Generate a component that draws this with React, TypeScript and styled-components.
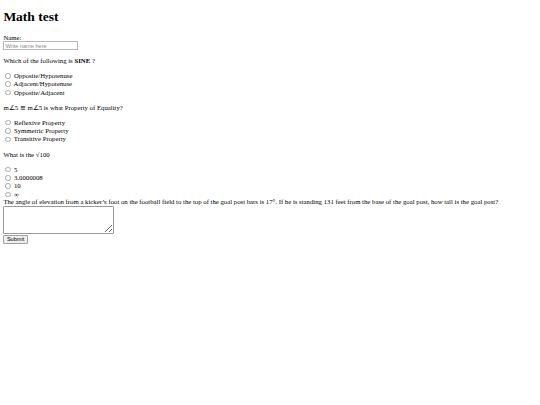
import styled, { createGlobalStyle } from 'styled-components'

// the reference is a 1280px-wide page photographed at 540px, so every
// browser default below is multiplied by 540 / 1280
const GlobalStyle = createGlobalStyle`
  body {
    margin: 0 3.375px 3.375px;
    font-family: "Liberation Serif", "Times New Roman", serif;
    font-size: 6.75px;
    color: #000;
    background: #fff;
  }
`

const Title = styled.h1`
  font-size: 13.5px;
  margin: 9px 0;
  font-weight: bold;
`

const Label = styled.label`
  display: block;
`

const NameInput = styled.input`
  box-sizing: border-box;
  width: 75px;
  height: 9px;
  padding: 0 1px;
  border: 1px solid #b8b8b8;
  border-radius: 0.5px;
  font-family: "Liberation Sans", Arial, sans-serif;
  font-size: 5.6px;

  &::placeholder {
    color: #8a8a8a;
  }
`

const Question = styled.p`
  margin: 7.2px 0;
  height: 7.6px;
  line-height: 7.6px;
`

const OptionList = styled.div``

const Option = styled.label`
  display: block;
  height: 8.3px;
  line-height: 8.3px;
`

const Radio = styled.input`
  appearance: none;
  box-sizing: border-box;
  width: 5.5px;
  height: 5.5px;
  margin: 0 1.3px 0 2.1px;
  border: 0.7px solid #a6a6a6;
  border-radius: 50%;
  background: #fff;
  vertical-align: -0.6px;

  &:checked {
    background: radial-gradient(circle, #1a73e8 45%, #fff 50%);
    border-color: #1a73e8;
  }
`

const Prompt = styled.div`
  line-height: 6.8px;
`

const AnswerBox = styled.textarea`
  display: block;
  box-sizing: border-box;
  width: 111px;
  height: 28px;
  margin: 0;
  padding: 1px;
  border: 1px solid #9a9a9a;
  border-radius: 1px;
  font-family: "Liberation Mono", monospace;
  font-size: 5.6px;
  resize: both;
`

const SubmitButton = styled.button`
  box-sizing: border-box;
  height: 9px;
  margin-top: 1.5px;
  padding: 0 2.5px;
  border: 1px solid #a0a0a0;
  border-radius: 1px;
  background: #efefef;
  font-family: "Liberation Sans", Arial, sans-serif;
  font-size: 5.6px;
  line-height: 1;
`

interface QuestionData {
  name: string
  prompt: React.ReactNode
  options: string[]
}

const questions: QuestionData[] = [
  {
    name: 'q1',
    prompt: (
      <>
        Which of the following is <b>SINE</b> ?
      </>
    ),
    options: ['Opposite/Hypotenuse', 'Adjacent/Hypotenuse', 'Opposite/Adjacent'],
  },
  {
    name: 'q2',
    prompt: 'm∠5 ≅ m∠5 is what Property of Equality?',
    options: ['Reflexive Property', 'Symmetric Property', 'Transitive Property'],
  },
  {
    name: 'q3',
    prompt: 'What is the √100',
    options: ['5', '3.0000008', '10', '∞'],
  },
]

const App: React.FC = () => {
  return (
    <>
      <GlobalStyle />
      <Title>Math test</Title>
      <form onSubmit={(e) => e.preventDefault()}>
        <Label htmlFor="name">Name:</Label>
        <NameInput id="name" type="text" placeholder="Write name here" />
        {questions.map((q) => (
          <div key={q.name}>
            <Question>{q.prompt}</Question>
            <OptionList>
              {q.options.map((opt) => (
                <Option key={opt}>
                  <Radio type="radio" name={q.name} value={opt} /> {opt}
                </Option>
              ))}
            </OptionList>
          </div>
        ))}
        <Prompt>
          The angle of elevation from a kicker’s foot on the football field to the top of the goal
          post bars is 17°. If he is standing 131 feet from the base of the goal post, how tall is
          the goal post?
        </Prompt>
        <AnswerBox />
        <SubmitButton type="submit">Submit</SubmitButton>
      </form>
    </>
  )
}

export default App
